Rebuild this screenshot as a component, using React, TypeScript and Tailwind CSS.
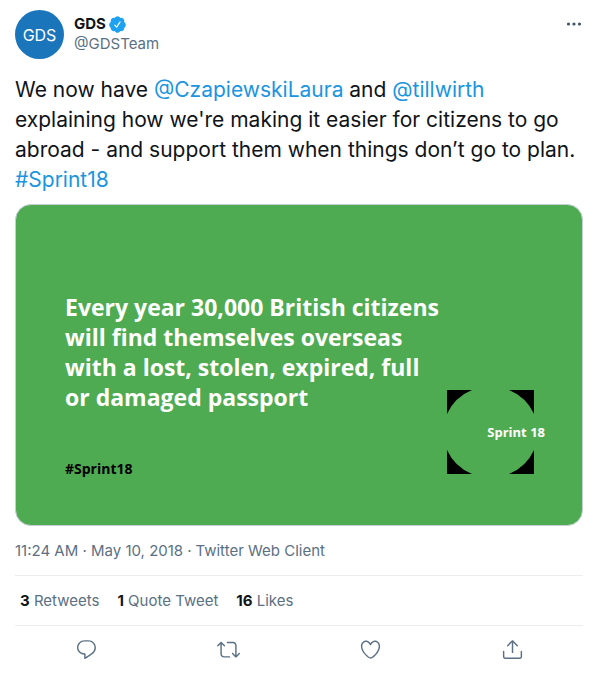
import type { ReactNode } from "react";

const REPLY =
  "M14.046 2.242l-4.148-.01h-.002c-4.374 0-7.8 3.427-7.8 7.802 0 4.098 3.186 7.206 7.465 7.37v3.828c0 .108.044.286.12.403.142.225.384.347.632.347.138 0 .277-.038.402-.118.264-.168 6.473-4.14 8.088-5.506 1.902-1.61 3.04-3.97 3.043-6.312v-.017c-.006-4.367-3.43-7.787-7.8-7.788zm3.787 12.972c-1.134.96-4.862 3.405-6.772 4.643V16.67c0-.414-.335-.75-.75-.75h-.396c-3.66 0-6.318-2.476-6.318-5.886 0-3.534 2.768-6.302 6.3-6.302l4.147.01h.002c3.532 0 6.3 2.766 6.302 6.296-.003 1.91-.942 3.844-2.514 5.176z";
const RETWEET =
  "M23.77 15.67c-.292-.293-.767-.293-1.06 0l-2.22 2.22V7.65c0-2.068-1.683-3.75-3.75-3.75h-5.85c-.414 0-.75.336-.75.75s.336.75.75.75h5.85c1.24 0 2.25 1.01 2.25 2.25v10.24l-2.22-2.22c-.293-.293-.768-.293-1.06 0s-.294.768 0 1.06l3.5 3.5c.145.147.337.22.53.22s.383-.072.53-.22l3.5-3.5c.294-.292.294-.767 0-1.06zm-10.66 3.28H7.26c-1.24 0-2.25-1.01-2.25-2.25V6.46l2.22 2.22c.148.147.34.22.532.22s.384-.073.53-.22c.293-.293.293-.768 0-1.06l-3.5-3.5c-.293-.294-.768-.294-1.06 0l-3.5 3.5c-.294.292-.294.767 0 1.06s.767.293 1.06 0l2.22-2.22V16.7c0 2.068 1.683 3.75 3.75 3.75h5.85c.414 0 .75-.336.75-.75s-.337-.75-.75-.75z";
const LIKE =
  "M12 21.638h-.014C9.403 21.59 1.95 14.856 1.95 8.478c0-3.064 2.525-5.754 5.403-5.754 2.29 0 3.83 1.58 4.646 2.73.814-1.148 2.354-2.73 4.645-2.73 2.88 0 5.404 2.69 5.404 5.755 0 6.376-7.454 13.11-10.037 13.157H12zM7.354 4.225c-2.08 0-3.903 1.988-3.903 4.255 0 5.74 7.034 11.596 8.55 11.658 1.518-.062 8.55-5.917 8.55-11.658 0-2.267-1.823-4.255-3.903-4.255-2.528 0-3.94 2.936-3.952 2.965-.23.562-1.156.562-1.387 0-.014-.03-1.425-2.965-3.954-2.965z";
const SHARE =
  "M17.53 7.47l-5-5c-.293-.293-.768-.293-1.06 0l-5 5c-.294.293-.294.768 0 1.06s.767.294 1.06 0l3.72-3.72V15c0 .414.336.75.75.75s.75-.336.75-.75V4.81l3.72 3.72c.146.147.338.22.53.22s.384-.072.53-.22c.293-.293.293-.767 0-1.06z M19.708 21.944H4.292C3.028 21.944 2 20.916 2 19.652V14c0-.414.336-.75.75-.75s.75.336.75.75v5.652c0 .437.355.792.792.792h15.416c.437 0 .792-.355.792-.792V14c0-.414.336-.75.75-.75s.75.336.75.75v5.652c0 1.264-1.028 2.292-2.292 2.292z";
const VERIFIED =
  "M22.5 12.5c0-1.58-.875-2.95-2.148-3.6.154-.435.238-.905.238-1.4 0-2.21-1.71-3.998-3.818-3.998-.47 0-.92.084-1.336.25C14.818 2.415 13.51 1.5 12 1.5s-2.816.917-3.437 2.25c-.415-.165-.866-.25-1.336-.25-2.11 0-3.818 1.79-3.818 4 0 .494.083.964.237 1.4-1.272.65-2.147 2.018-2.147 3.6 0 1.495.782 2.798 1.942 3.486-.02.17-.032.34-.032.514 0 2.21 1.708 4 3.818 4 .47 0 .92-.086 1.335-.25.62 1.334 1.926 2.25 3.437 2.25 1.512 0 2.818-.916 3.437-2.25.415.163.865.248 1.336.248 2.11 0 3.818-1.79 3.818-4 0-.174-.012-.344-.033-.513 1.158-.687 1.943-1.99 1.943-3.484zm-6.616-3.334l-4.334 6.5c-.145.217-.382.334-.625.334-.143 0-.288-.04-.416-.126l-.115-.094-2.415-2.415c-.293-.293-.293-.768 0-1.06s.768-.294 1.06 0l1.77 1.767 3.825-5.74c.23-.345.696-.436 1.04-.207.346.23.44.696.21 1.04z";

const actions = [
  { label: "Reply", path: REPLY },
  { label: "Retweet", path: RETWEET },
  { label: "Like", path: LIKE },
  { label: "Share", path: SHARE },
];

const stats = [
  { count: 3, label: "Retweets" },
  { count: 1, label: "Quote Tweet" },
  { count: 16, label: "Likes" },
];

function TextLink({ children }: { children: ReactNode }) {
  return (
    <a href="#" className="text-[#1b95e0]">
      {children}
    </a>
  );
}

function Header() {
  return (
    <header className="flex items-start">
      <a
        href="#"
        aria-label="GDS profile"
        className="flex size-[49px] shrink-0 items-center justify-center rounded-full bg-[#1b75bb] text-base text-white"
      >
        GDS
      </a>
      <div className="ml-[10px] flex-1 pt-1 text-[15px] leading-5">
        <div className="flex items-center gap-[2px]">
          <a href="#" className="font-bold">
            GDS
          </a>
          <svg viewBox="0 0 24 24" className="size-[19px] fill-[#1da1f2]" role="img" aria-label="Verified account">
            <path d={VERIFIED} />
          </svg>
        </div>
        <a href="#" className="block text-[#5b7083]">
          @GDSTeam
        </a>
      </div>
      <button type="button" aria-label="More" className="flex h-[27px] items-center">
        <svg viewBox="0 0 18 18" className="size-[18px] fill-[#3f5468]">
          <circle cx="3.5" cy="9" r="1.6" />
          <circle cx="9" cy="9" r="1.6" />
          <circle cx="14.5" cy="9" r="1.6" />
        </svg>
      </button>
    </header>
  );
}

function SprintLogo() {
  return (
    <div className="grid w-[98px] shrink-0 items-center">
      <svg viewBox="0 0 87 84" className="col-start-1 row-start-1 h-[84px] w-[87px]" aria-hidden="true">
        <path
          d="M0 0H25A47 47 0 0 0 0 24ZM62 0H87V24A47 47 0 0 0 62 0ZM0 60A47 47 0 0 0 25 84H0ZM87 60V84H62A47 47 0 0 0 87 60Z"
          fill="#000"
        />
      </svg>
      <span className="col-start-1 row-start-1 justify-self-end text-[13px] leading-5 font-bold whitespace-nowrap text-white">
        Sprint 18
      </span>
    </div>
  );
}

function MediaCard() {
  return (
    <section className="mt-[9px] flex items-end justify-between rounded-2xl border border-[#c4cfd6] bg-[#4fab51] pt-[87px] pr-[37px] pb-[51px] pl-[49px] font-['Open_Sans',sans-serif]">
      <div className="min-w-0">
        <p className="text-[23px] leading-[30px] font-bold whitespace-nowrap text-white">
          Every year 30,000 British citizens
          <br />
          will find themselves overseas
          <br />
          with a lost, stolen, expired, full
          <br />
          or damaged passport
        </p>
        <p className="mt-[47px] -mb-[5px] text-sm leading-5 font-bold text-black">#Sprint18</p>
      </div>
      <SprintLogo />
    </section>
  );
}

export default function App() {
  return (
    <article className="bg-white px-[15px] pt-[10px] pb-3 font-[Inter,sans-serif] text-[#0f1419]">
      <Header />
      <p className="mt-4 text-[21px] leading-[30px]">
        We now have <TextLink>@CzapiewskiLaura</TextLink> and <TextLink>@tillwirth</TextLink> explaining how we're
        making it easier for citizens to go abroad - and support them when things don’t go to plan.{" "}
        <TextLink>#Sprint18</TextLink>
      </p>
      <MediaCard />
      <div className="flex gap-1 border-b border-[#ebeef0] pt-[15px] pb-[14px] text-[15px] leading-5 text-[#5b7083]">
        <a href="#">11:24 AM · May 10, 2018</a>
        <span>·</span>
        <a href="#">Twitter Web Client</a>
      </div>
      <div className="flex gap-[18px] border-b border-[#ebeef0] px-[5px] pt-[15px] pb-[14px] text-[15px] leading-5 text-[#5b7083]">
        {stats.map((s) => (
          <a key={s.label} href="#">
            <span className="font-bold text-[#0f1419]">{s.count}</span> {s.label}
          </a>
        ))}
      </div>
      <div className="grid grid-cols-4 justify-items-center pt-3">
        {actions.map((a) => (
          <button key={a.label} type="button" aria-label={a.label}>
            <svg viewBox="0 0 24 24" className="size-[23px] fill-[#5b7083]">
              <path d={a.path} />
            </svg>
          </button>
        ))}
      </div>
    </article>
  );
}
